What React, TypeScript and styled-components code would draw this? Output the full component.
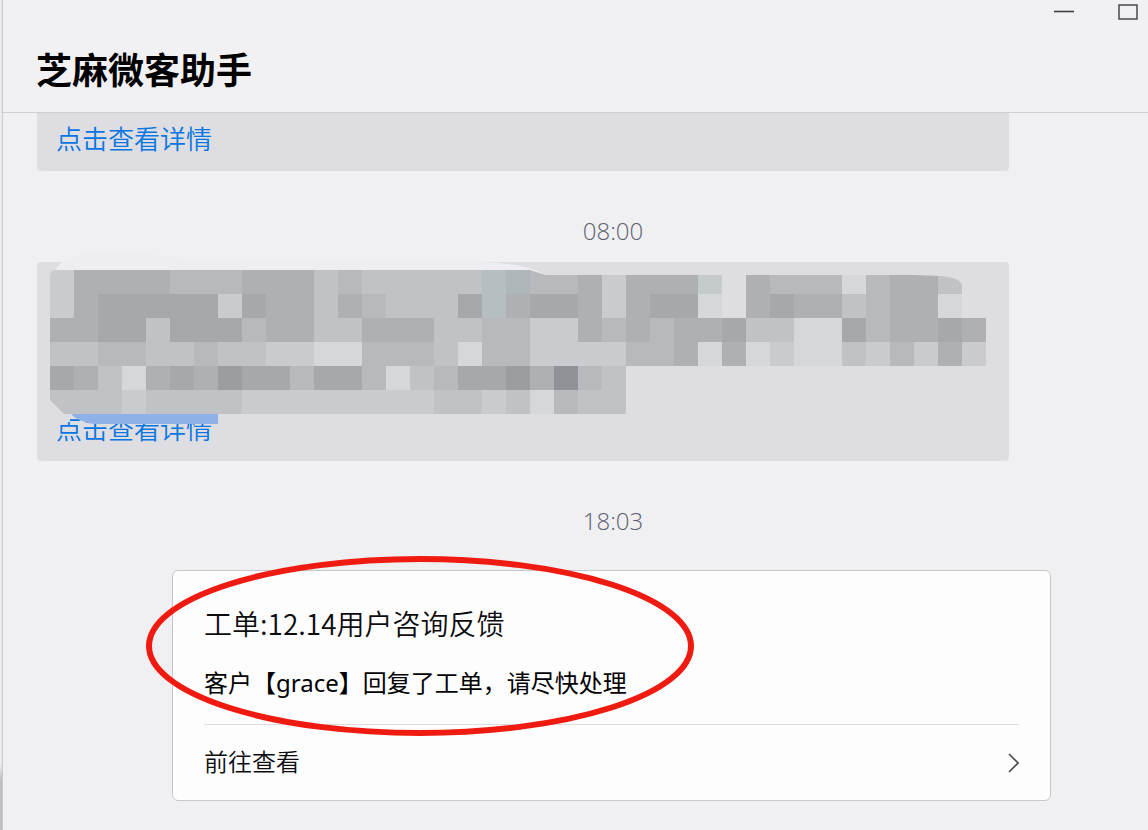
import React from "react";
import styled, { createGlobalStyle } from "styled-components";

const GlobalStyle = createGlobalStyle`
  *, *::before, *::after { box-sizing: border-box; }
  body {
    margin: 0;
    background: #f0f0f3;
    color: #0c0c0f;
    font-family: "Noto Sans", "Noto Sans CJK SC", sans-serif;
  }
`;

const Window = styled.div`
  display: flex;
  min-height: 100vh;
`;

const Edge = styled.div`
  flex: 0 0 3px;
  border-right: 1px solid #c6c9ce;
  background: linear-gradient(#e9ebef 0 92%, #bfbfc2 94%);
`;

const Pane = styled.div`
  flex: 1;
  min-width: 0;
`;

const Header = styled.header`
  display: flex;
  flex-direction: column;
  height: 113px;
  border-bottom: 1px solid #cfcfd3;
  background: #f1f1f3;
`;

const Controls = styled.div`
  display: flex;
  justify-content: flex-end;
  gap: 24px;
`;

const ControlButton = styled.button`
  display: flex;
  align-items: center;
  justify-content: center;
  width: 40px;
  height: 24px;
  padding: 0;
  border: 0;
  background: none;
  color: #3d3d42;
`;

const Title = styled.h1`
  margin: 18px 33px 0;
  color: #000;
  font-family: "Noto Sans CJK SC", sans-serif;
  font-size: 36px;
  line-height: 52px;
  font-weight: 700;
`;

const Messages = styled.main`
  padding: 0 97px 29px 34px;
`;

const Bubble = styled.section<{ $tall?: boolean }>`
  position: relative;
  display: flex;
  align-items: flex-end;
  min-height: ${(p) => (p.$tall ? 199 : 58)}px;
  margin-right: 42px;
  padding: 0 19px 14px;
  border-radius: ${(p) => (p.$tall ? "4px" : "0 0 4px 4px")};
  background: #dedde2;
`;

const DetailLink = styled.a`
  color: #0676e2;
  font-size: 26px;
  line-height: 36px;
  font-weight: 350;
  text-decoration: none;
`;

const Time = styled.time`
  display: block;
  margin: 44px 0 15px 138px;
  color: #5c606e;
  font-family: "Open Sans", sans-serif;
  font-size: 24px;
  line-height: 32px;
  font-weight: 300;
  text-align: center;
`;

const MosaicLayer = styled.svg`
  position: absolute;
  left: 13px;
  top: -12px;
  pointer-events: none;
`;

const Card = styled.article`
  position: relative;
  margin: 33px 0 0 135px;
  padding: 32px 31px 0;
  border: 1px solid #c6c7ca;
  border-radius: 6px;
  background: #fdfdfe;
`;

const CardTitle = styled.h2`
  margin: 0;
  font-family: "Noto Sans CJK SC", sans-serif;
  font-size: 28px;
  line-height: 40px;
  font-weight: 350;
`;

const CardText = styled.p`
  margin: 20px 0 0;
  padding-bottom: 21px;
  border-bottom: 1px solid #dcdce0;
  color: #000;
  font-size: 24px;
  line-height: 40px;
`;

const CardAction = styled.button`
  display: flex;
  align-items: center;
  justify-content: space-between;
  width: 100%;
  height: 75px;
  padding: 0 0 4px;
  border: 0;
  background: none;
  color: inherit;
  font: inherit;
  font-size: 24px;
  font-weight: 350;
  text-align: left;
`;

const Highlight = styled.svg`
  position: absolute;
  left: -27px;
  top: -16px;
  pointer-events: none;
`;

const TONES: Record<string, string> = {
  a: "#d6d7da",
  b: "#cacbce",
  c: "#c1c2c5",
  d: "#b8b9bc",
  e: "#afb0b3",
  f: "#a7a8aa",
  g: "#9b9ea1",
  h: "#8f9398",
  s: "#adb6b9",
  t: "#b5bfc1",
  u: "#c5cacd",
};

const CELL = 24;

const MOSAIC = [
  "beeeedddeeecdccccctsddebeeeu.edddadeec.",
  "befffffbfeecedcccfteffebeffa.efeecdeea.",
  "eeffcfffdeecceeeccddbbededeefccaafdeefe",
  "ccddccdccbbaadddcaddbbbbddeaeabaacbdbeb",
  "fecaefegffdffdacdffgehdc",
  "cccbccccbbbbbbbbccbcadcc",
];

function Mosaic() {
  return (
    <MosaicLayer width="960" height="176" viewBox="0 0 960 176" aria-hidden="true">
      <defs>
        <clipPath id="brush">
          <path d="M0 26Q0 20 6 20H480L496 25H864L890 26Q912 28 912 36V62H936V164H14L0 150Z" />
        </clipPath>
      </defs>
      <path d="M4 24Q8 8 38 3Q78 0 132 8L170 12H430Q475 13 496 25H480V22H4Z" fill="#eeeef2" />
      <path d="M3 152L20 163V172H8Z" fill="#dedde2" />
      <path d="M20 163H168V174H44Q28 172 20 163Z" fill="#8eb2e8" />
      <g clipPath="url(#brush)" shapeRendering="crispEdges">
        {MOSAIC.map((row, y) =>
          [...row].map((tone, x) =>
            tone === "." ? null : (
              <rect
                key={`${x}-${y}`}
                x={x * CELL}
                y={20 + y * CELL}
                width={CELL}
                height={CELL}
                fill={TONES[tone]}
              />
            )
          )
        )}
      </g>
    </MosaicLayer>
  );
}

export default function App() {
  return (
    <>
      <GlobalStyle />
      <Window>
        <Edge />
        <Pane>
          <Header>
            <Controls>
              <ControlButton aria-label="最小化">
                <svg width="20" height="16" viewBox="0 0 20 16">
                  <path d="M0 7.5H20" stroke="currentColor" strokeWidth="1.6" />
                </svg>
              </ControlButton>
              <ControlButton aria-label="最大化">
                <svg width="20" height="16" viewBox="0 0 20 16" fill="none">
                  <rect x="1" y="1" width="18" height="14" stroke="currentColor" strokeWidth="1.4" />
                </svg>
              </ControlButton>
            </Controls>
            <Title>芝麻微客助手</Title>
          </Header>
          <Messages>
            <Bubble>
              <DetailLink href="#detail">点击查看详情</DetailLink>
            </Bubble>
            <Time>08:00</Time>
            <Bubble $tall>
              <DetailLink href="#detail">点击查看详情</DetailLink>
              <Mosaic />
            </Bubble>
            <Time>18:03</Time>
            <Card>
              <CardTitle>工单:12.14用户咨询反馈</CardTitle>
              <CardText>客户【grace】回复了工单，请尽快处理</CardText>
              <CardAction>
                前往查看
                <svg width="12" height="24" viewBox="0 0 12 24" fill="none" aria-hidden="true">
                  <path d="M2 5L11 14L2 23" stroke="#48484d" strokeWidth="1.6" />
                </svg>
              </CardAction>
              <Highlight width="550" height="182" viewBox="0 0 550 182" fill="none" aria-hidden="true">
                <ellipse cx="274" cy="91" rx="271" ry="87" stroke="#f01b10" strokeWidth="6" />
              </Highlight>
            </Card>
          </Messages>
        </Pane>
      </Window>
    </>
  );
}
